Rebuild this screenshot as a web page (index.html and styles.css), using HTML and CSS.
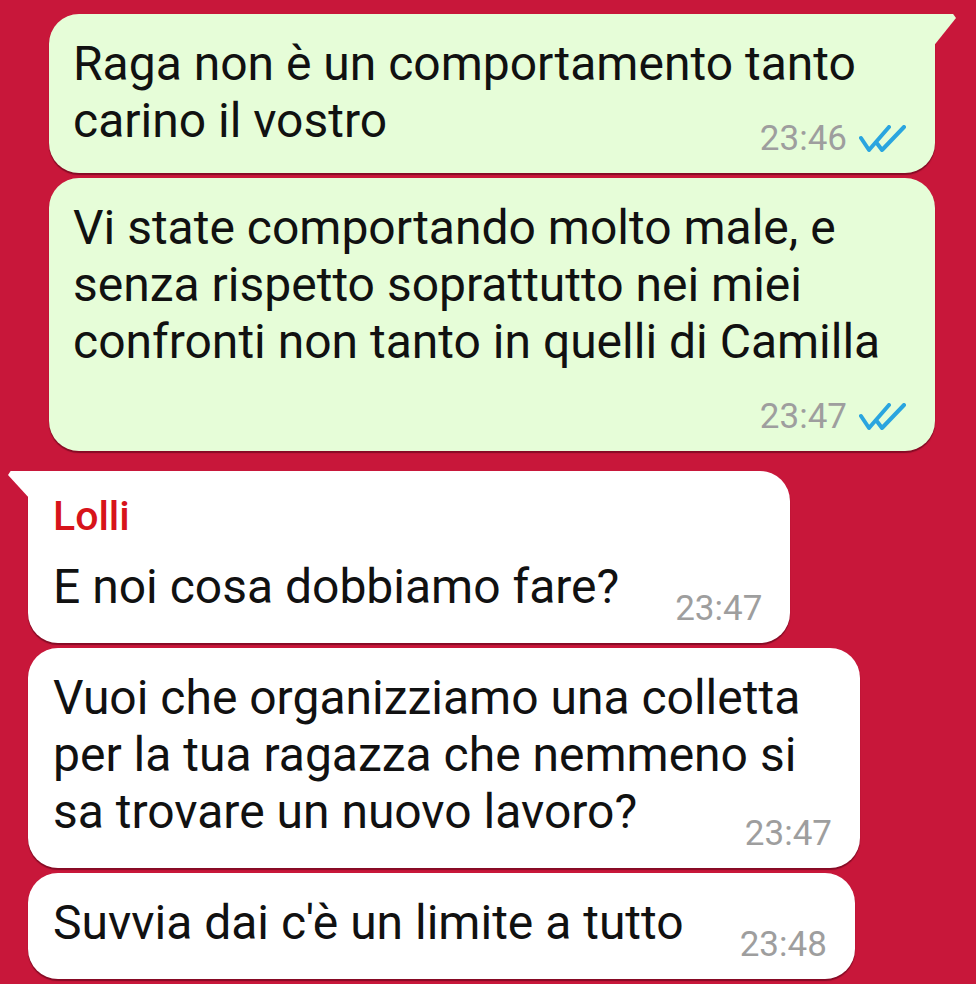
FILE: index.html
```html
<!DOCTYPE html>
<html lang="it">
  <head>
    <meta charset="UTF-8" />
    <meta name="viewport" content="width=device-width, initial-scale=1.0" />
    <title>Chat</title>
    <link rel="stylesheet" href="styles.css">
  </head>

  <body>
    <div class="chat">
      <div class="bubble out first">
        <p class="text">Raga non è un comportamento tanto carino il vostro<span class="meta">23:46<svg class="ticks" viewBox="0 0 48 28"><path d="M2 13 L10 25 L30 2 M17 17 L23 25 L45 2" /></svg></span></p>
      </div>

      <div class="bubble out">
        <p class="text">Vi state comportando molto male, e senza rispetto soprattutto nei miei confronti non tanto in quelli di Camilla<span class="meta">23:47<svg class="ticks" viewBox="0 0 48 28"><path d="M2 13 L10 25 L30 2 M17 17 L23 25 L45 2" /></svg></span></p>
      </div>

      <div class="bubble in first group">
        <div class="sender">Lolli</div>
        <p class="text">E noi cosa dobbiamo fare?<span class="meta">23:47</span></p>
      </div>

      <div class="bubble in">
        <p class="text">Vuoi che organizziamo una colletta per la tua ragazza che nemmeno si sa trovare un nuovo lavoro?<span class="meta">23:47</span></p>
      </div>

      <div class="bubble in">
        <p class="text">Suvvia dai c'è un limite a tutto<span class="meta">23:48</span></p>
      </div>
    </div>
  </body>
</html>
```

FILE: styles.css
```css
* {
  box-sizing: border-box;
  margin: 0;
  padding: 0;
}

body {
  font-family: Roboto, "Noto Sans", sans-serif;
  background-color: #c8173a;
  height: 100vh;
  overflow: hidden;
}

.chat {
  display: flex;
  flex-direction: column;
  align-items: flex-start;
  padding-top: 14px;
}

.bubble {
  position: relative;
  border-radius: 30px;
  padding: 21px 28px 14px 24px;
  margin-top: 5px;
  box-shadow: 0 2px 1px rgba(80, 0, 20, 0.55);
}

.bubble.out {
  background-color: #e6fdd8;
  margin-left: 49px;
  width: 886px;
  padding-left: 24px;
}

.bubble.in {
  background-color: #ffffff;
  margin-left: 28px;
  max-width: 832px;
  padding-left: 25px;
}

.bubble.group {
  margin-top: 20px;
}

/* tails on the first bubble of each group */
.bubble.out.first {
  margin-top: 0;
  border-top-right-radius: 0;
}

.bubble.out.first::after {
  content: "";
  position: absolute;
  top: 0;
  right: -21px;
  width: 24px;
  height: 34px;
  background-color: #e6fdd8;
  clip-path: polygon(0 0, 88% 0, 100% 12%, 0 100%);
}

.bubble.in.first {
  border-top-left-radius: 0;
}

.bubble.in.first::before {
  content: "";
  position: absolute;
  top: 0;
  left: -20px;
  width: 22px;
  height: 28px;
  background-color: #ffffff;
  clip-path: polygon(12% 0, 100% 0, 100% 100%, 0 14%);
}

.sender {
  color: #d7131b;
  font-size: 41px;
  font-weight: 500;
  line-height: 48px;
  margin-bottom: 18px;
}

.text {
  display: flow-root;
  font-size: 48px;
  line-height: 57px;
  color: #111111;
}

.meta {
  float: right;
  display: flex;
  align-items: center;
  gap: 12px;
  margin-top: 27px;
  margin-left: 56px;
  font-size: 35px;
  line-height: 40px;
  color: #9e9e9e;
}

.bubble.in .meta {
  margin-top: 31px;
}

.ticks {
  width: 48px;
  height: 28px;
  fill: none;
  stroke: #2aa5df;
  stroke-width: 4;
  stroke-linecap: round;
  stroke-linejoin: round;
}
```
